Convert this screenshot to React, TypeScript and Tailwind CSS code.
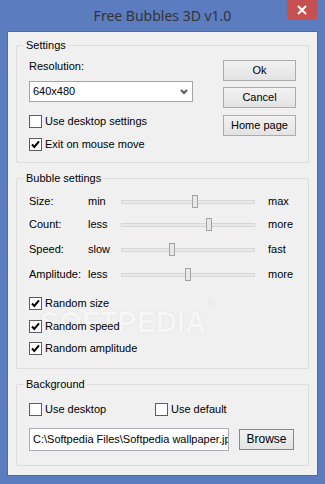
import React from "react";

const ui = "font-['Liberation_Sans',Arial,sans-serif] text-[11px] leading-[13px] text-black";

function CheckBox({ checked, label }: { checked?: boolean; label: string }) {
    return (
        <div className="flex items-center h-[13px]">
            <span className="w-[13px] h-[13px] shrink-0 border border-[#5c5c5c] bg-white flex items-center justify-center">
                {checked && (
                    <svg width="9" height="9" viewBox="0 0 9 9">
                        <path d="M1 4.5 L3.3 7 L8 1.3" stroke="#000" strokeWidth="2" fill="none" />
                    </svg>
                )}
            </span>
            <span className="ml-[3px] whitespace-nowrap">{label}</span>
        </div>
    );
}

function Group({ title, className, children }: { title: string; className?: string; children: React.ReactNode }) {
    return (
        <div className={"relative border border-[#dcdcdc] rounded-[2px] " + (className ?? "")}>
            <span className="absolute -top-[7px] left-[7px] px-[2px] bg-[#f0f0f0] whitespace-nowrap">{title}</span>
            {children}
        </div>
    );
}

function WinButton({ label, focused, className }: { label: string; focused?: boolean; className?: string }) {
    return (
        <div
            className={
                "h-[21px] flex items-center justify-center border bg-linear-to-b from-[#f2f2f2] to-[#e3e3e3] " +
                (focused ? "border-[#3c9bef] " : "border-[#acacac] ") +
                (className ?? "")
            }
        >
            {label}
        </div>
    );
}

function SliderRow({ label, low, high, pos }: { label: string; low: string; high: string; pos: number }) {
    return (
        <div className="flex items-center h-[13px]">
            <span className="w-[59px]">{label}</span>
            <span className="w-[33px]">{low}</span>
            <div className="relative w-[134px] h-[13px] flex items-center">
                <div className="w-full h-[4px] border border-[#d6d6d6] bg-[#e7eaea]" />
                <div
                    className="absolute top-0 w-[6px] h-[13px] border border-[#a3a3a3] bg-[#e8e8e8]"
                    style={{ left: pos - 3 }}
                />
            </div>
            <span className="ml-[13px]">{high}</span>
        </div>
    );
}

export default function App() {
    return (
        <div className="w-[325px] h-[484px] bg-[#5b7dbf] flex flex-col">
            <div className="relative h-[31px] shrink-0 flex items-center justify-center">
                <span className="font-['Noto_Sans',sans-serif] text-[14px] text-[#333333] -mt-[1px]">
                    Free Bubbles 3D v1.0
                </span>
                <div className="absolute top-0 right-[8px] w-[30px] h-[20px] bg-[#c75050] flex items-center justify-center">
                    <svg width="10" height="10" viewBox="0 0 10 10">
                        <path d="M1 1 L9 9 M9 1 L1 9" stroke="#fff" strokeWidth="2" />
                    </svg>
                </div>
            </div>

            <div className="mx-[7px] mb-[8px] flex-1 border border-[#4d6aa8]">
                <div className={"relative h-full bg-[#f0f0f0] px-[8px] pt-[13px] " + ui}>
                    <Group title="Settings" className="flex justify-between pl-[12px] pr-[12px] pt-[14px] pb-[11px]">
                        <div className="flex flex-col">
                            <span>Resolution:</span>
                            <div className="mt-[8px] w-[164px] h-[21px] border border-[#a5a5a5] bg-white flex items-center justify-between pl-[3px] pr-[4px]">
                                <span>640x480</span>
                                <svg width="8" height="6" viewBox="0 0 8 6">
                                    <path d="M1 1 L4 4 L7 1" stroke="#5a5a5a" strokeWidth="2" fill="none" />
                                </svg>
                            </div>
                            <div className="mt-[13px]">
                                <CheckBox label="Use desktop settings" />
                            </div>
                            <div className="mt-[10px]">
                                <CheckBox checked label="Exit on mouse move" />
                            </div>
                        </div>
                        <div className="flex flex-col w-[73px]">
                            <WinButton label="Ok" />
                            <WinButton label="Cancel" className="mt-[6px]" />
                            <WinButton label="Home page" className="mt-[7px]" />
                        </div>
                    </Group>

                    <Group title="Bubble settings" className="mt-[15px] pl-[12px] pt-[16px] pb-[13px]">
                        <span className="absolute top-[129px] left-[23px] font-['Liberation_Sans',Arial,sans-serif] font-bold text-[29px] leading-none text-[#f6f6f6] [text-shadow:0_0_1px_#d2d2d2] pointer-events-none">
                            SOFTPEDIA
                            <sup className="text-[10px] font-normal align-top ml-[1px]">®</sup>
                        </span>
                        <div className="relative">
                            <SliderRow label="Size:" low="min" high="max" pos={74} />
                            <div className="mt-[10px]">
                                <SliderRow label="Count:" low="less" high="more" pos={88} />
                            </div>
                            <div className="mt-[12px]">
                                <SliderRow label="Speed:" low="slow" high="fast" pos={51} />
                            </div>
                            <div className="mt-[12px]">
                                <SliderRow label="Amplitude:" low="less" high="more" pos={67} />
                            </div>
                            <div className="mt-[16px]">
                                <CheckBox checked label="Random size" />
                            </div>
                            <div className="mt-[10px]">
                                <CheckBox checked label="Random speed" />
                            </div>
                            <div className="mt-[9px]">
                                <CheckBox checked label="Random amplitude" />
                            </div>
                        </div>
                    </Group>

                    <Group title="Background" className="mt-[15px] pl-[12px] pt-[18px] pb-[14px]">
                        <div className="flex">
                            <div className="w-[126px]">
                                <CheckBox label="Use desktop" />
                            </div>
                            <CheckBox label="Use default" />
                        </div>
                        <div className="mt-[12px] flex items-center">
                            <div className="w-[200px] h-[23px] border border-[#abadb3] bg-white flex items-center pl-[3px] overflow-hidden whitespace-nowrap">
                                C:\Softpedia Files\Softpedia wallpaper.jpg
                            </div>
                            <WinButton label="Browse" focused className="ml-[10px] w-[55px] text-[12px]" />
                        </div>
                    </Group>
                </div>
            </div>
        </div>
    );
}
